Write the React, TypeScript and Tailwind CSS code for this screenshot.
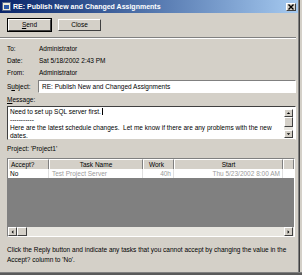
const font = { fontFamily: '"Liberation Sans", Arial, sans-serif' };

function Btn({ label, under, primary }: { label: string; under: string; primary?: boolean }) {
  const rest = label.slice(under.length);
  return (
    <div className={primary ? "border border-black" : "border border-transparent"}>
      <div className="w-[43px] h-[12px] flex items-center justify-center border-t border-l border-t-white border-l-white border-r border-b border-r-[#404040] border-b-[#404040] bg-[#d4d0c8] text-[6.5px] text-black">
        <span className="underline">{under}</span>
        {rest}
      </div>
    </div>
  );
}

function Field({ label, value }: { label: string; value: string }) {
  return (
    <div className="flex h-[12px] items-center text-[6.5px] text-black">
      <span className="w-[32px]">{label}</span>
      <span>{value}</span>
    </div>
  );
}

function Arrow({ dir }: { dir: "up" | "down" | "left" | "right" }) {
  const pts = {
    up: "2,5 6,5 4,3",
    down: "2,3 6,3 4,5",
    left: "5,2 5,6 3,4",
    right: "3,2 3,6 5,4",
  }[dir];
  return (
    <div className="w-[9px] h-[8px] bg-[#d4d0c8] border-t border-l border-t-white border-l-white border-r border-b border-r-[#404040] border-b-[#404040] flex items-center justify-center">
      <svg width="8" height="8" viewBox="0 0 8 8">
        <polygon points={pts} fill="#000" />
      </svg>
    </div>
  );
}

export default function App() {
  return (
    <div className="w-[302px] h-[275px] bg-[#d4d0c8] overflow-hidden" style={font}>
      <div className="flex h-[272px]">
        <div className="w-[298px] flex flex-col">
          {/* title bar */}
          <div className="h-[13px] flex items-center bg-gradient-to-r from-[#0a246a] to-[#a6caf0] pl-[2px] pr-[2px]">
            <div className="w-[9px] h-[9px] bg-[#f0ecd8] border border-[#5a6a8a] flex items-center justify-center">
              <div className="w-[5px] h-[4px] bg-[#2d5aa8]" />
            </div>
            <span className="ml-[2px] text-white font-bold text-[7px] leading-none">
              RE: Publish New and Changed Assignments
            </span>
            <div className="ml-auto w-[10px] h-[8px] bg-[#d4d0c8] border-t border-l border-t-white border-l-white border-r border-b border-r-[#404040] border-b-[#404040] flex items-center justify-center">
              <svg width="6" height="6" viewBox="0 0 6 6">
                <path d="M0.5 0.5 L5.5 5.5 M5.5 0.5 L0.5 5.5" stroke="#000" strokeWidth="1.4" />
              </svg>
            </div>
          </div>

          {/* buttons */}
          <div className="flex gap-[5px] pl-[7px] mt-[5px]">
            <Btn label="Send" under="S" primary />
            <Btn label="Close" under="" />
          </div>

          {/* separator */}
          <div className="mt-[5px] w-[296px] border-t border-t-[#808080] border-b border-b-white" />

          <div className="pl-[7px] mt-[4px]">
            <Field label="To:" value="Administrator" />
            <Field label="Date:" value="Sat 5/18/2002 2:43 PM" />
            <Field label="From:" value="Administrator" />
          </div>

          {/* subject */}
          <div className="flex items-center pl-[7px] mt-[1px] text-[6.5px] text-black">
            <span className="w-[31px]">
              S<span className="underline">u</span>bject:
            </span>
            <div className="w-[258px] h-[13px] bg-white border-t border-l border-t-[#808080] border-l-[#808080] border-r border-b border-r-white border-b-white flex items-center pl-[3px]">
              RE: Publish New and Changed Assignments
            </div>
          </div>

          <div className="pl-[7px] mt-[1px] h-[12px] flex items-center text-[6.5px] text-black">
            <span className="underline">M</span>essage:
          </div>

          {/* message box */}
          <div className="ml-[7px] w-[289px] h-[34px] bg-white border-t border-l border-t-[#404040] border-l-[#404040] border-r border-b border-r-white border-b-[#d4d0c8] flex">
            <div className="flex-1 pl-[2px] pt-[1px] text-[6.5px] leading-[8px] text-black whitespace-pre overflow-hidden">
              <div>
                Need to set up SQL server first.<span className="border-l border-black ml-[1px]" />
              </div>
              <div>-----------</div>
              <div>Here are the latest schedule changes.  Let me know if there are any problems with the new</div>
              <div>dates.</div>
            </div>
            <div className="w-[11px] flex flex-col pt-[2px] pb-[1px]">
              <Arrow dir="up" />
              <div className="w-[9px] h-[10px] bg-[#d4d0c8] border-t border-l border-t-white border-l-white border-r border-b border-r-[#404040] border-b-[#404040]" />
              <div className="flex-1 bg-[#e8e6e0] w-[9px]" />
              <Arrow dir="down" />
            </div>
          </div>

          <div className="pl-[7px] mt-[3px] h-[12px] flex items-center text-[6.5px] text-black">
            Project: 'Project1'
          </div>

          {/* table */}
          <div className="ml-[7px] mt-[3px] w-[288px] h-[79px] border-t border-l border-t-[#808080] border-l-[#808080] border-r border-b border-r-white border-b-white flex flex-col text-[6.5px]">
            <div className="grid grid-cols-[41px_94px_31px_109px_1fr] h-[10px]">
              {["Accept?", "Task Name", "Work", "Start", ""].map((h, i) => (
                <div
                  key={i}
                  className={
                    "bg-[#d4d0c8] border-t border-l border-t-white border-l-white border-r border-b border-r-[#808080] border-b-[#808080] flex items-center text-black " +
                    (i === 0 ? "pl-[2px]" : i === 2 ? "justify-end pr-[9px]" : "justify-center")
                  }
                >
                  {h}
                </div>
              ))}
            </div>
            <div className="grid grid-cols-[41px_94px_31px_109px_1fr] h-[9px] bg-white">
              <div className="pl-[2px] flex items-center text-black border-r border-b border-[#e0e0e0]">No</div>
              <div className="pl-[3px] flex items-center text-[#9a9a9a] border-r border-b border-[#e0e0e0]">Test Project Server</div>
              <div className="pr-[2px] flex items-center justify-end text-[#9a9a9a] border-r border-b border-[#e0e0e0]">40h</div>
              <div className="pr-[2px] flex items-center justify-end text-[#9a9a9a] border-r border-b border-[#e0e0e0]">Thu 5/23/2002 8:00 AM</div>
              <div className="border-b border-[#e0e0e0]" />
            </div>
            <div className="flex-1 bg-[#808080]" />
            <div className="h-[9px] flex bg-[#e8e6e0] pr-[1px]">
              <div className="[&>div]:h-[9px]">
                <Arrow dir="left" />
              </div>
              <div className="w-[10px] h-[9px] bg-[#d4d0c8] border-t border-l border-t-white border-l-white border-r border-b border-r-[#404040] border-b-[#404040]" />
              <div className="flex-1" />
              <div className="[&>div]:h-[9px]">
                <Arrow dir="right" />
              </div>
            </div>
          </div>

          <div className="pl-[7px] mt-[8px] text-[6.5px] leading-[10px] text-black">
            <div>Click the Reply button and indicate any tasks that you cannot accept by changing the value in the</div>
            <div>Accept? column to 'No'.</div>
          </div>
        </div>
        <div className="w-[1px] bg-[#808080]" />
        <div className="w-[1px] bg-[#404040]" />
      </div>
      <div className="h-[1px] bg-[#808080]" />
      <div className="h-[2px] bg-[#5a5a5a]" />
    </div>
  );
}
